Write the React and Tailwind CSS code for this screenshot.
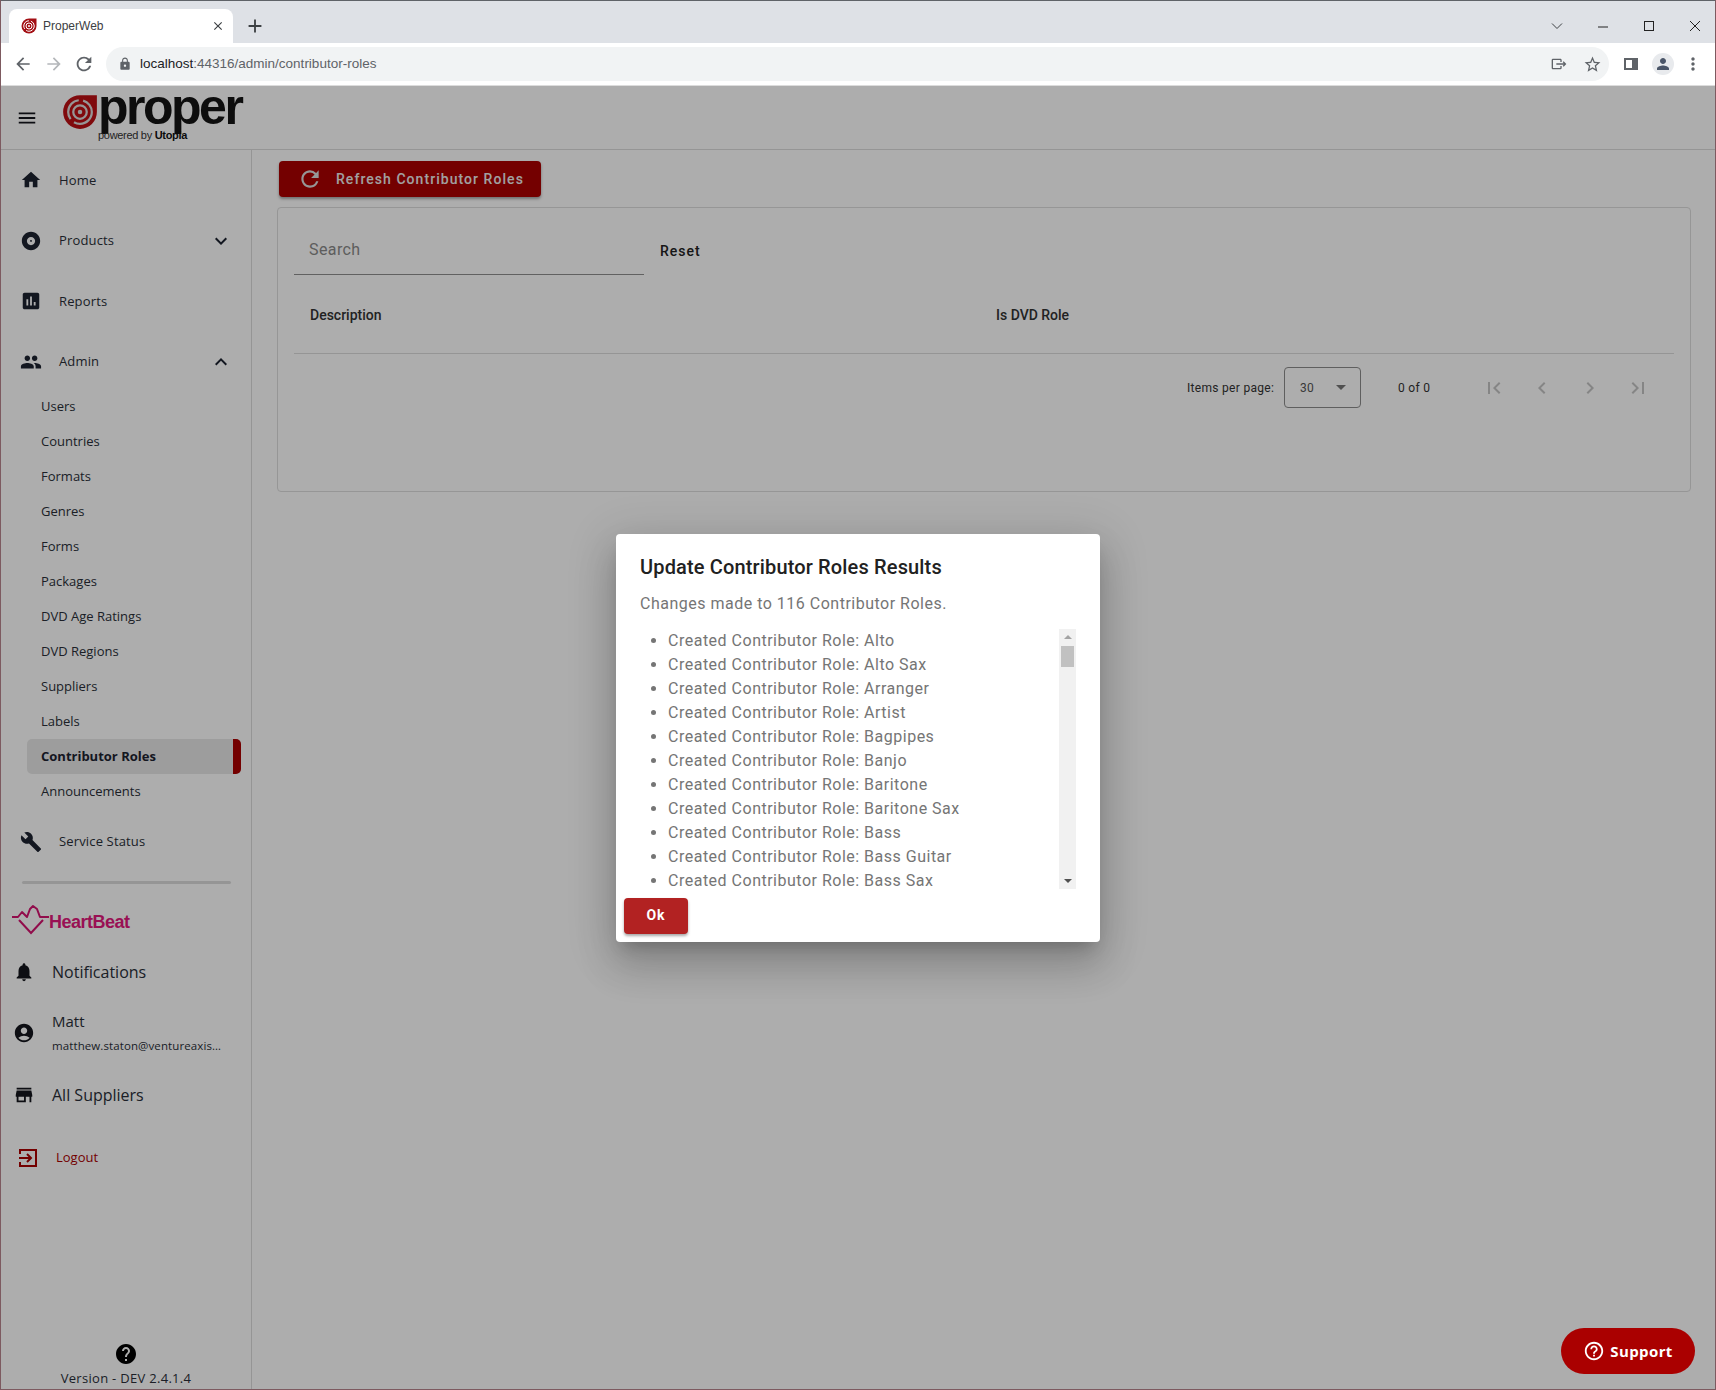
import React from 'react';
import { MdHome, MdAlbum, MdAssessment, MdPeople, MdBuild, MdNotifications, MdAccountCircle, MdStore, MdHelp, MdHelpOutline, MdRefresh, MdExpandMore, MdExpandLess, MdFirstPage, MdChevronLeft, MdChevronRight, MdLastPage, MdMenu, MdArrowBack, MdArrowForward, MdLock, MdClose, MdAdd, MdStarBorder, MdMoreVert, MdPerson, MdOutlineIosShare } from 'react-icons/md';

const sans = "font-['Open_Sans',sans-serif]";
const roboto = "font-['Roboto',sans-serif]";

const subs = ['Users','Countries','Formats','Genres','Forms','Packages','DVD Age Ratings','DVD Regions','Suppliers','Labels','Contributor Roles','Announcements'];
const roles = ['Alto','Alto Sax','Arranger','Artist','Bagpipes','Banjo','Baritone','Baritone Sax','Bass','Bass Guitar','Bass Sax'];

function Favicon({ size = 16 }) {
  return (
    <svg width={size} height={size} viewBox="0 0 32 32">
      <path d="M16 1h15v15a15 15 0 1 1-15-15z" fill="#a30f14" />
      <circle cx="16" cy="16" r="10.5" fill="none" stroke="#fff" strokeWidth="2" strokeDasharray="22 4" />
      <circle cx="16" cy="16" r="6" fill="none" stroke="#fff" strokeWidth="2" />
      <circle cx="16" cy="16" r="2" fill="#fff" />
    </svg>
  );
}

function NavItem({ icon: Icon, label, chevron: Chevron, className = '' }) {
  return (
    <div className={`flex items-center pl-[19px] h-[60.5px] ${className}`}>
      <span className="w-[39px] flex"><Icon size={22} className="text-[#1c2230]" /></span>
      <span className="text-[13px] tracking-[0.15px] text-[#2a2f38] flex-1">{label}</span>
      {Chevron && <Chevron size={24} className="text-[#1c2230] mr-[18px]" />}
    </div>
  );
}

function LowerItem({ icon: Icon, children, className = '' }) {
  return (
    <div className={`flex items-center pl-[12px] ${className}`}>
      <span className="w-[39px] flex"><Icon size={22} className="text-[#14161c]" /></span>
      <div className="text-[#2a2f38]">{children}</div>
    </div>
  );
}

function Sidebar() {
  return (
    <aside className={`w-[251px] shrink-0 border-r border-[#dcdcdc] flex flex-col ${sans}`}>
      <NavItem icon={MdHome} label="Home" />
      <NavItem icon={MdAlbum} label="Products" chevron={MdExpandMore} />
      <NavItem icon={MdAssessment} label="Reports" />
      <NavItem icon={MdPeople} label="Admin" chevron={MdExpandLess} />
      <div className="-mt-[3px] flex flex-col">
        {subs.map((s) => {
          const active = s === 'Contributor Roles';
          return (
            <div key={s} className={`h-[35px] ml-[26px] w-[214px] pl-[14px] flex items-center text-[13px] rounded-[5px] relative ${active ? 'bg-[#e8e8e8] font-bold text-[#1c2230]' : 'text-[#2a2f38]'}`}>
              {s}
              {active && <span className="absolute right-0 top-0 bottom-0 w-[8px] bg-[#ab0000] rounded-r-[5px]" />}
            </div>
          );
        })}
      </div>
      <NavItem icon={MdBuild} label="Service Status" className="mt-[3px] h-[60px]" />
      <div className="mt-[9px] ml-[21px] w-[209px] h-[3px] rounded bg-[#dcdcdc]" />
      <div className="flex items-center pl-[11px] h-[36px] mt-[18px]">
        <svg width="38" height="32" viewBox="0 0 38 32" fill="none" stroke="#d6136f" strokeWidth="2">
          <path d="M0 13h6l4-5 5 5 3-8 3-3 4 3 3 8h9" strokeLinejoin="round" />
          <path d="M7 16l12 13 12-13" />
        </svg>
        <span className="text-[18px] font-bold text-[#e2187c] -ml-[1px] tracking-[-0.5px] mt-[5px] font-['Liberation_Sans',sans-serif]">HeartBeat</span>
      </div>
      <LowerItem icon={MdNotifications} className="h-[34px] mt-[17px]"><span className="text-[16px]">Notifications</span></LowerItem>
      <LowerItem icon={MdAccountCircle} className="h-[60px] mt-[14px]">
        <div className="text-[15px] leading-[22px]">Matt</div>
        <div className="text-[11.5px] leading-[20px] mt-[4px] w-[172px] truncate tracking-[0.1px]">matthew.staton@ventureaxis.com</div>
      </LowerItem>
      <LowerItem icon={MdStore} className="h-[34px] mt-[15px]"><span className="text-[16px]">All Suppliers</span></LowerItem>
      <div className="flex items-center pl-[17px] h-[30px] mt-[31px]">
        <svg width="20" height="20" viewBox="0 0 20 20" fill="none" stroke="#ab0000" strokeWidth="2" className="mr-[18px]">
          <path d="M2 6V2h16v16H2v-4" />
          <path d="M1 10h11M9 6l4 4-4 4" />
        </svg>
        <span className="text-[13px] text-[#ab0000]">Logout</span>
      </div>
      <div className="mt-auto flex flex-col items-center pb-[2px]">
        <MdHelp size={24} className="text-black" />
        <div className="text-[13px] text-[#2a2f38] mt-[3px] tracking-[0.3px] leading-[18px]">Version - DEV 2.4.1.4</div>
      </div>
    </aside>
  );
}

function Main() {
  return (
    <main className={`flex-1 pl-[25px] pr-[25px] pt-[11px] ${roboto}`}>
      <button className="ml-[2px] h-[36px] w-[262px] rounded-[4px] bg-[#ab0000] text-[#fff] flex items-center shadow-[0_2px_3px_rgba(0,0,0,0.35)] pl-[18px]">
        <MdRefresh size={26} className="mr-[13px] text-[#ddd]" />
        <span className="text-[14px] font-medium tracking-[1.05px] text-[#eee]">Refresh Contributor Roles</span>
      </button>
      <section className="mt-[10px] w-[1414px] h-[285px] bg-white border border-[#dddddd] rounded-[4px] px-[16px]">
        <div className="flex items-start h-[69px]">
          <div className="w-[350px] h-[67px] border-b border-[#8f8f8f] pl-[15px] pt-[31px] text-[16px] text-[#8a8a8a] tracking-[0.4px] leading-[22px]">Search</div>
          <span className="ml-[16px] mt-[32px] text-[14px] font-medium tracking-[1px] text-[#222] leading-[22px]">Reset</span>
        </div>
        <div className="flex items-center h-[77px] border-b border-[#dcdcdc] text-[14px] font-medium text-[#333] pl-[16px] pb-[0px]">
          <span className="w-[686px]">Description</span>
          <span>Is DVD Role</span>
        </div>
        <div className="flex items-center h-[41px] mt-[13px] text-[12px] text-[#333] tracking-[0.3px]">
          <span className="ml-[893px] w-[97px]">Items per page:</span>
          <div className="w-[77px] h-[41px] border border-[#8c8c8c] rounded-[4px] flex items-center pl-[15px] text-[#555]">
            <span className="flex-1">30</span>
            <span className="mr-[14px] w-0 h-0 border-l-[5px] border-r-[5px] border-t-[5px] border-l-transparent border-r-transparent border-t-[#777]" />
          </div>
          <span className="ml-[37px] w-[88px] text-[#333]">0 of 0</span>
          <div className="flex text-[#c4c4c4] ml-[-4px]">
            <MdFirstPage size={24} className="mr-[24px]" />
            <MdChevronLeft size={24} className="mr-[24px]" />
            <MdChevronRight size={24} className="mr-[24px]" />
            <MdLastPage size={24} />
          </div>
        </div>
      </section>
    </main>
  );
}

function Dialog() {
  return (
    <div className={`w-[484px] h-[408px] bg-white rounded-[4px] shadow-[0_11px_15px_-7px_rgba(0,0,0,0.2),0_24px_38px_3px_rgba(0,0,0,0.14),0_9px_46px_8px_rgba(0,0,0,0.12)] flex flex-col ${roboto}`}>
      <h2 className="ml-[24px] mt-[18px] text-[20px] leading-[30px] font-medium tracking-[0.15px] text-[#212121]">Update Contributor Roles Results</h2>
      <p className="ml-[24px] mt-[10px] text-[16px] leading-[24px] tracking-[0.5px] text-[#757575]">Changes made to 116 Contributor Roles.</p>
      <div className="ml-[24px] mt-[13px] w-[436px] h-[260px] flex">
        <ul className="flex-1 list-disc pl-[28px] text-[16px] leading-[24px] tracking-[0.5px] text-[#757575] marker:text-[#757575] pt-[0px]">
          {roles.map((r) => <li key={r}>Created Contributor Role: {r}</li>)}
        </ul>
        <div className="w-[17px] h-[260px] bg-[#f1f1f1] relative flex justify-center">
          <span className="absolute top-[6px] w-0 h-0 border-l-[4px] border-r-[4px] border-b-[4px] border-l-transparent border-r-transparent border-b-[#a3a3a3]" />
          <span className="absolute top-[17px] left-[2px] w-[13px] h-[21px] bg-[#c1c1c1]" />
          <span className="absolute bottom-[6px] w-0 h-0 border-l-[4px] border-r-[4px] border-t-[4px] border-l-transparent border-r-transparent border-t-[#505050]" />
        </div>
      </div>
      <button className="ml-[8px] mt-[9px] w-[64px] h-[36px] rounded-[4px] bg-[#b22222] text-white text-[14px] font-bold tracking-[1px] shadow-[0_2px_3px_rgba(0,0,0,0.35)]">Ok</button>
    </div>
  );
}

export default function App() {
  return (
    <div className="h-[1390px] w-[1716px] overflow-hidden flex flex-col border-l border-r border-b border-[#7d5a60] relative">
      <div className="h-[43px] shrink-0 bg-[#dee1e6] border-t border-[#5f6368] flex items-end pl-[8px] relative">
        <div className="w-[224px] h-[34px] bg-white rounded-t-[8px] flex items-center pl-[12px] font-['Liberation_Sans',sans-serif]">
          <Favicon />
          <span className="ml-[6px] text-[12px] text-[#3c4043] flex-1">ProperWeb</span>
          <MdClose size={14} className="mr-[8px] text-[#3c4043]" />
        </div>
        <MdAdd size={22} className="ml-[11px] mb-[6px] text-[#3c4043]" />
        <div className="ml-auto flex items-center h-full text-[#222] mb-[16px] self-start pt-[7px] pr-[13px]">
          <svg width="14" height="14" viewBox="0 0 14 14" fill="none" stroke="#3c4043" strokeWidth="1" className="mr-[32px]"><path d="M2 4.5l5 5 5-5" /></svg>
          <svg width="14" height="14" viewBox="0 0 14 14" stroke="#222" strokeWidth="1" className="mr-[32px]"><path d="M2 8h10" /></svg>
          <svg width="14" height="14" viewBox="0 0 14 14" fill="none" stroke="#222" strokeWidth="1" className="mr-[32px]"><rect x="2.5" y="2.5" width="9" height="9" /></svg>
          <svg width="14" height="14" viewBox="0 0 14 14" fill="none" stroke="#222" strokeWidth="1"><path d="M2 2l10 10M12 2L2 12" /></svg>
        </div>
      </div>
      <div className="h-[43px] shrink-0 bg-white border-b border-[#dcdcdc] flex items-center pl-[12px] pr-[12px] font-['Liberation_Sans',sans-serif]">
        <MdArrowBack size={20} className="text-[#5f6368]" />
        <MdArrowForward size={20} className="ml-[11px] text-[#b4b7ba]" />
        <MdRefresh size={22} className="ml-[9px] text-[#5f6368]" />
        <div className="ml-[11px] flex-1 h-[34px] rounded-full bg-[#f1f3f4] flex items-center pl-[12px]">
          <MdLock size={14} className="text-[#5f6368]" />
          <span className="ml-[8px] text-[13.5px] text-[#202124]">localhost<span className="text-[#5f6368]">:44316/admin/contributor-roles</span></span>
          <span className="ml-auto flex items-center">
            <MdOutlineIosShare size={16} className="text-[#5f6368] rotate-90 mr-[16px]" />
            <MdStarBorder size={19} className="text-[#5f6368] mr-[7px]" />
          </span>
        </div>
        <span className="ml-[15px] w-[14px] h-[12px] border-[2px] border-[#5f6368] border-r-[6px] bg-white" />
        <span className="ml-[14px] w-[22px] h-[22px] rounded-full bg-[#e8eaed] flex items-center justify-center"><MdPerson size={18} className="text-[#4b5669]" /></span>
        <MdMoreVert size={20} className="ml-[9px] text-[#5f6368]" />
      </div>
      <div className="flex-1 relative flex flex-col bg-white min-h-0">
        <header className={`h-[64px] shrink-0 border-b border-[#dcdcdc] flex items-center pl-[15px] ${sans}`}>
          <MdMenu size={22} className="text-[#14161c]" />
          <div className="ml-[24px] -mt-[4px] relative w-[180px] h-[60px] flex items-start">
            <svg width="36" height="36" viewBox="0 0 32 32" className="mt-[8px] shrink-0">
              <path d="M16 1h15v15a15 15 0 1 1-15-15z" fill="#bd0f14" />
              <circle cx="16" cy="16" r="10.5" fill="none" stroke="#ddd" strokeWidth="2" strokeDasharray="22 4" />
              <circle cx="16" cy="16" r="6" fill="none" stroke="#ddd" strokeWidth="2" />
              <circle cx="16" cy="16" r="2" fill="#ddd" />
            </svg>
            <span className="text-[50px] leading-[46px] font-bold tracking-[-2.5px] text-[#141414] font-['Liberation_Sans',sans-serif] -mt-[2px]">proper</span>
            <span className="absolute left-[36px] top-[42px] text-[11px] leading-[14px] text-[#333] tracking-[-0.3px] whitespace-nowrap font-['Liberation_Sans',sans-serif]">powered by <b className="text-[#111]">Utopia</b></span>
          </div>
        </header>
        <div className="flex-1 flex min-h-0">
          <Sidebar />
          <Main />
        </div>
        <div className="absolute inset-0 bg-black/32 flex items-center justify-center">
          <Dialog />
        </div>
        <button className={`absolute right-[20px] bottom-[15px] w-[134px] h-[46px] rounded-full bg-[#aa0000] text-white flex items-center justify-center text-[15px] font-bold tracking-[0.4px] ${sans}`}>
          <MdHelpOutline size={22} className="mr-[5px]" />Support
        </button>
      </div>
    </div>
  );
}
